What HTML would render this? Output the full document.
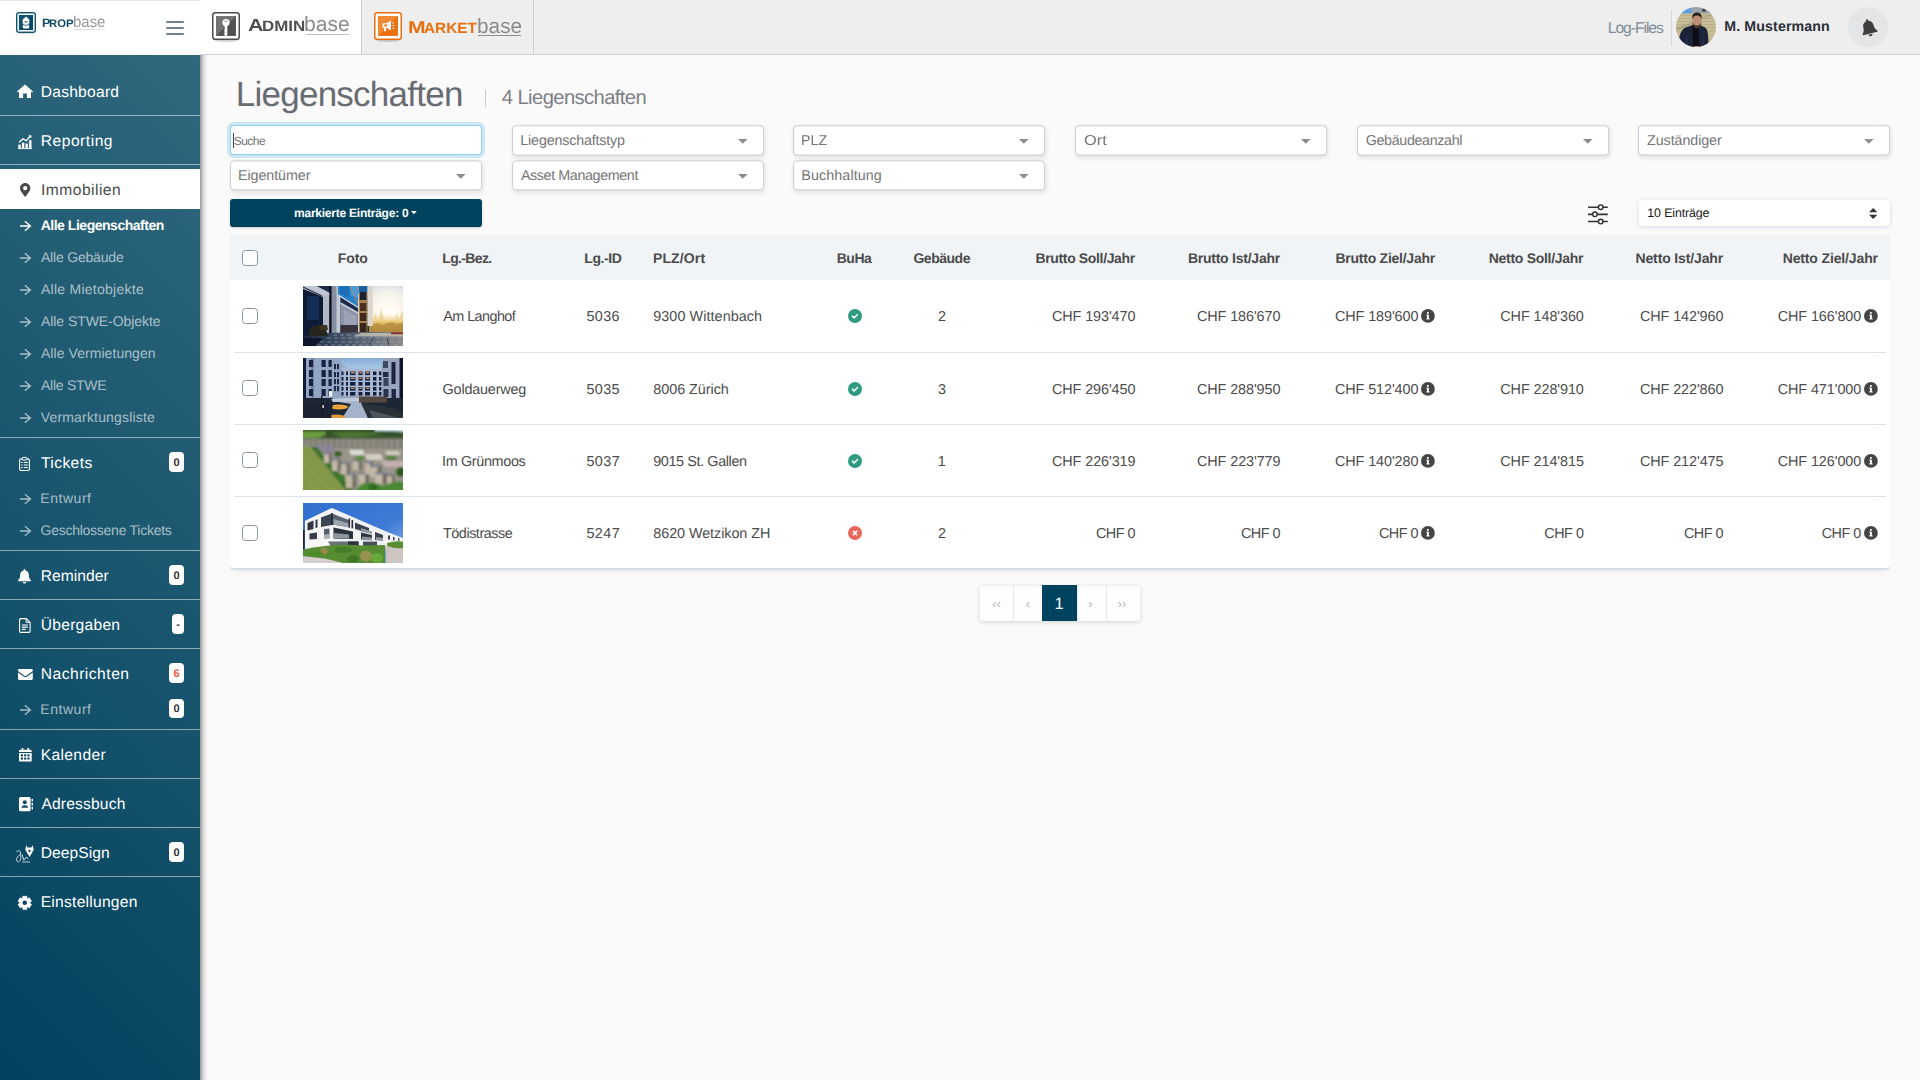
<!DOCTYPE html><html lang="de"><head><meta charset="utf-8"><title>Liegenschaften</title><style>
*{box-sizing:border-box;margin:0;padding:0}
html,body{width:1920px;height:1080px;overflow:hidden;background:#fafafa;font-family:"Liberation Sans",sans-serif;text-rendering:geometricPrecision;}
.t{position:absolute;white-space:nowrap;display:block}
.b{position:absolute;display:block}
svg{position:absolute;display:block;overflow:visible}
</style></head><body>
<div class="b" style="left:200px;top:0px;width:1720px;height:54px;background:#eee;"></div>
<div class="b" style="left:0px;top:0px;width:361px;height:54px;background:#fff;"></div>
<div class="b" style="left:200px;top:54px;width:1720px;height:1px;background:#ccd3d8;"></div>
<div class="b" style="left:361px;top:0px;width:1px;height:54px;background:#cfcfcf;"></div>
<div class="b" style="left:533px;top:0px;width:1px;height:54px;background:#cfcfcf;"></div>
<div class="b" style="left:0px;top:0px;width:200px;height:1px;background:#e4e4e4;"></div>
<aside style="position:absolute;left:0;top:0;width:0;height:0">
<div class="b" style="left:0px;top:55px;width:200px;height:1025px;background:linear-gradient(225deg,#30687d 0%,#19556e 50%,#02425e 100%);"></div>
<div class="b" style="left:200px;top:55px;width:8px;height:1025px;background:linear-gradient(90deg,rgba(0,0,0,.42) 0%,rgba(0,0,0,.22) 25%,rgba(0,0,0,.08) 60%,rgba(0,0,0,0) 100%);"></div>
<div class="b" style="left:0px;top:115px;width:200px;height:1px;background:rgba(255,255,255,.5);"></div>
<div class="b" style="left:0px;top:164px;width:200px;height:1px;background:rgba(255,255,255,.5);"></div>
<div class="b" style="left:0px;top:437px;width:200px;height:1px;background:rgba(255,255,255,.5);"></div>
<div class="b" style="left:0px;top:550px;width:200px;height:1px;background:rgba(255,255,255,.5);"></div>
<div class="b" style="left:0px;top:599px;width:200px;height:1px;background:rgba(255,255,255,.5);"></div>
<div class="b" style="left:0px;top:648px;width:200px;height:1px;background:rgba(255,255,255,.5);"></div>
<div class="b" style="left:0px;top:729px;width:200px;height:1px;background:rgba(255,255,255,.5);"></div>
<div class="b" style="left:0px;top:778px;width:200px;height:1px;background:rgba(255,255,255,.5);"></div>
<div class="b" style="left:0px;top:827px;width:200px;height:1px;background:rgba(255,255,255,.5);"></div>
<div class="b" style="left:0px;top:876px;width:200px;height:1px;background:rgba(255,255,255,.5);"></div>
<div class="b" style="left:0px;top:169px;width:200px;height:40px;background:#fff;"></div>
<span class="t" style="left:40.73px;top:81.00px;font-size:15.6px;line-height:24px;color:#fff;letter-spacing:0.248px;">Dashboard</span>
<span class="t" style="left:40.73px;top:130.00px;font-size:15.6px;line-height:24px;color:#fff;letter-spacing:0.520px;">Reporting</span>
<span class="t" style="left:41.06px;top:179.00px;font-size:15.6px;line-height:24px;color:#4a4a4a;letter-spacing:0.472px;">Immobilien</span>
<span class="t" style="left:40.96px;top:452.00px;font-size:15.6px;line-height:24px;color:#fff;letter-spacing:0.416px;">Tickets</span>
<span class="t" style="left:40.73px;top:565.00px;font-size:15.6px;line-height:24px;color:#fff;letter-spacing:0.060px;">Reminder</span>
<span class="t" style="left:40.80px;top:614.00px;font-size:15.6px;line-height:24px;color:#fff;letter-spacing:0.256px;">Übergaben</span>
<span class="t" style="left:40.73px;top:663.00px;font-size:15.6px;line-height:24px;color:#fff;letter-spacing:0.506px;">Nachrichten</span>
<span class="t" style="left:40.73px;top:744.00px;font-size:15.6px;line-height:24px;color:#fff;letter-spacing:0.356px;">Kalender</span>
<span class="t" style="left:41.47px;top:793.00px;font-size:15.6px;line-height:24px;color:#fff;letter-spacing:0.165px;">Adressbuch</span>
<span class="t" style="left:40.73px;top:842.00px;font-size:15.6px;line-height:24px;color:#fff;letter-spacing:0.054px;">DeepSign</span>
<span class="t" style="left:40.73px;top:891.00px;font-size:15.6px;line-height:24px;color:#fff;letter-spacing:0.253px;">Einstellungen</span>
<span class="t" style="left:40.66px;top:214.00px;font-size:14px;line-height:22px;color:#fff;font-weight:700;letter-spacing:-0.475px;">Alle Liegenschaften</span>
<svg style="left:20.3px;top:221px;" width="11" height="10" viewBox="0 0 11 10"><path d="M0 5 H10.2 M4.9 0.3 L10.4 5 L4.9 9.7" stroke="#fff" stroke-width="1.4" fill="none" stroke-linejoin="miter"/></svg>
<span class="t" style="left:40.98px;top:246.00px;font-size:14px;line-height:22px;color:rgba(255,255,255,.62);letter-spacing:-0.193px;">Alle Gebäude</span>
<svg style="left:20.3px;top:253px;" width="11" height="10" viewBox="0 0 11 10"><path d="M0 5 H10.2 M4.9 0.3 L10.4 5 L4.9 9.7" stroke="rgba(255,255,255,.62)" stroke-width="1.4" fill="none" stroke-linejoin="miter"/></svg>
<span class="t" style="left:40.98px;top:278.00px;font-size:14px;line-height:22px;color:rgba(255,255,255,.62);letter-spacing:0.260px;">Alle Mietobjekte</span>
<svg style="left:20.3px;top:285px;" width="11" height="10" viewBox="0 0 11 10"><path d="M0 5 H10.2 M4.9 0.3 L10.4 5 L4.9 9.7" stroke="rgba(255,255,255,.62)" stroke-width="1.4" fill="none" stroke-linejoin="miter"/></svg>
<span class="t" style="left:40.98px;top:310.00px;font-size:14px;line-height:22px;color:rgba(255,255,255,.62);letter-spacing:-0.060px;">Alle STWE-Objekte</span>
<svg style="left:20.3px;top:317px;" width="11" height="10" viewBox="0 0 11 10"><path d="M0 5 H10.2 M4.9 0.3 L10.4 5 L4.9 9.7" stroke="rgba(255,255,255,.62)" stroke-width="1.4" fill="none" stroke-linejoin="miter"/></svg>
<span class="t" style="left:40.98px;top:342.00px;font-size:14px;line-height:22px;color:rgba(255,255,255,.62);letter-spacing:0.061px;">Alle Vermietungen</span>
<svg style="left:20.3px;top:349px;" width="11" height="10" viewBox="0 0 11 10"><path d="M0 5 H10.2 M4.9 0.3 L10.4 5 L4.9 9.7" stroke="rgba(255,255,255,.62)" stroke-width="1.4" fill="none" stroke-linejoin="miter"/></svg>
<span class="t" style="left:40.98px;top:374.00px;font-size:14px;line-height:22px;color:rgba(255,255,255,.62);letter-spacing:-0.260px;">Alle STWE</span>
<svg style="left:20.3px;top:381px;" width="11" height="10" viewBox="0 0 11 10"><path d="M0 5 H10.2 M4.9 0.3 L10.4 5 L4.9 9.7" stroke="rgba(255,255,255,.62)" stroke-width="1.4" fill="none" stroke-linejoin="miter"/></svg>
<span class="t" style="left:40.75px;top:406.00px;font-size:14px;line-height:22px;color:rgba(255,255,255,.62);letter-spacing:0.174px;">Vermarktungsliste</span>
<svg style="left:20.3px;top:413px;" width="11" height="10" viewBox="0 0 11 10"><path d="M0 5 H10.2 M4.9 0.3 L10.4 5 L4.9 9.7" stroke="rgba(255,255,255,.62)" stroke-width="1.4" fill="none" stroke-linejoin="miter"/></svg>
<span class="t" style="left:40.36px;top:487.00px;font-size:14px;line-height:22px;color:rgba(255,255,255,.62);letter-spacing:0.523px;">Entwurf</span>
<svg style="left:20.3px;top:494px;" width="11" height="10" viewBox="0 0 11 10"><path d="M0 5 H10.2 M4.9 0.3 L10.4 5 L4.9 9.7" stroke="rgba(255,255,255,.62)" stroke-width="1.4" fill="none" stroke-linejoin="miter"/></svg>
<span class="t" style="left:40.60px;top:519.00px;font-size:14px;line-height:22px;color:rgba(255,255,255,.62);letter-spacing:-0.262px;">Geschlossene Tickets</span>
<svg style="left:20.3px;top:526px;" width="11" height="10" viewBox="0 0 11 10"><path d="M0 5 H10.2 M4.9 0.3 L10.4 5 L4.9 9.7" stroke="rgba(255,255,255,.62)" stroke-width="1.4" fill="none" stroke-linejoin="miter"/></svg>
<span class="t" style="left:40.36px;top:698.00px;font-size:14px;line-height:22px;color:rgba(255,255,255,.62);letter-spacing:0.523px;">Entwurf</span>
<svg style="left:20.3px;top:705.2px;" width="11" height="10" viewBox="0 0 11 10"><path d="M0 5 H10.2 M4.9 0.3 L10.4 5 L4.9 9.7" stroke="rgba(255,255,255,.62)" stroke-width="1.4" fill="none" stroke-linejoin="miter"/></svg>
<div class="b" style="left:169px;top:452.25px;width:15px;height:19.5px;background:#fff;border-radius:4px;"></div>
<span class="t" style="left:173.45px;top:455.00px;font-size:11px;line-height:16px;color:#333;font-weight:700;">0</span>
<div class="b" style="left:169px;top:565.25px;width:15px;height:19.5px;background:#fff;border-radius:4px;"></div>
<span class="t" style="left:173.45px;top:568.00px;font-size:11px;line-height:16px;color:#333;font-weight:700;">0</span>
<div class="b" style="left:172px;top:614.25px;width:12px;height:19.5px;background:#fff;border-radius:4px;"></div>
<span class="t" style="left:176.17px;top:617.00px;font-size:11px;line-height:16px;color:#333;font-weight:700;">-</span>
<div class="b" style="left:169px;top:663.25px;width:15px;height:19.5px;background:#fff;border-radius:4px;"></div>
<span class="t" style="left:173.44px;top:666.00px;font-size:11px;line-height:16px;color:#e8604c;font-weight:700;">6</span>
<div class="b" style="left:169px;top:698.75px;width:15px;height:19.5px;background:#fff;border-radius:4px;"></div>
<span class="t" style="left:173.45px;top:701.00px;font-size:11px;line-height:16px;color:#333;font-weight:700;">0</span>
<div class="b" style="left:169px;top:842.25px;width:15px;height:19.5px;background:#fff;border-radius:4px;"></div>
<span class="t" style="left:173.45px;top:845.00px;font-size:11px;line-height:16px;color:#333;font-weight:700;">0</span>
<svg style="left:16.7px;top:84.4px;" width="16" height="14" viewBox="0 0 16 14"><path d="M8 0.6 L16 7.4 L15.1 8.4 L14 7.5 V13.4 Q14 14 13.4 14 H9.9 V9.6 H6.1 V14 H2.6 Q2 14 2 13.4 V7.5 L0.9 8.4 L0 7.4 Z" fill="#fff"/></svg>
<svg style="left:17.7px;top:134.8px;" width="14" height="14.2" viewBox="0 0 14 14.2"><rect x="0.3" y="9.6" width="2.4" height="3.8" fill="#fff"/><rect x="3.9" y="7.6" width="2.4" height="5.8" fill="#fff"/><rect x="7.5" y="8.6" width="2.4" height="4.8" fill="#fff"/><rect x="11.1" y="5.2" width="2.4" height="8.2" fill="#fff"/><rect x="0" y="13.2" width="14" height="0.9" fill="#fff"/><path d="M1.2 7.2 L4.9 3.8 L8.3 5.6 L12.2 1.2" stroke="#fff" stroke-width="1.3" fill="none"/><path d="M10.4 0.3 H13.4 V3.3 Z" fill="#fff"/></svg>
<svg style="left:19.5px;top:183.1px;" width="10.4" height="13.8" viewBox="0 0 10.4 13.8"><path d="M5.2 0 C2.3 0 0 2.3 0 5.2 C0 7.3 0.7 7.9 4.65 13.4 Q5.2 14.1 5.75 13.4 C9.7 7.9 10.4 7.3 10.4 5.2 C10.4 2.3 8.1 0 5.2 0 Z M5.2 3.1 A2.1 2.1 0 1 1 5.2 7.3 A2.1 2.1 0 1 1 5.2 3.1 Z" fill="#4a4a4a" fill-rule="evenodd"/></svg>
<svg style="left:19px;top:457px;" width="11" height="14" viewBox="0 0 11 14"><rect x="0.6" y="1.9" width="9.8" height="11.6" rx="1.5" fill="none" stroke="#fff" stroke-width="1.1"/><rect x="3" y="0.4" width="5" height="2.6" rx="1" fill="#1c5871" stroke="#fff" stroke-width="1"/><path d="M4.8 5.4 H8.8 M4.8 8 H8.8 M4.8 10.6 H8.8" stroke="#fff" stroke-width="1"/><path d="M2.3 5.4 H3.6 M2.3 8 H3.6 M2.3 10.6 H3.6" stroke="#fff" stroke-width="1.1"/></svg>
<svg style="left:18.4px;top:568.9px;" width="13.0" height="14.6" viewBox="0 0 13 14.6"><path d="M6.5 0 Q7.4 0 7.4 0.9 V1.4 C9.6 1.9 10.9 3.7 10.9 6 C10.9 9 11.7 10 12.7 11 Q13.3 11.7 12.6 12.2 H0.4 Q-0.3 11.7 0.3 11 C1.3 10 2.1 9 2.1 6 C2.1 3.7 3.4 1.9 5.6 1.4 V0.9 Q5.6 0 6.5 0 Z M4.8 12.9 H8.2 A1.7 1.7 0 0 1 4.8 12.9 Z" fill="#fff"/></svg>
<svg style="left:19px;top:617.5px;" width="11.7" height="15" viewBox="0 0 11.7 15"><path d="M1.6 0.6 H7.2 L11.1 4.5 V13.3 Q11.1 14.4 10 14.4 H1.6 Q0.6 14.4 0.6 13.3 V1.6 Q0.6 0.6 1.6 0.6 Z" fill="none" stroke="#fff" stroke-width="1.1"/><path d="M7.2 0.6 V4.5 H11.1" fill="none" stroke="#fff" stroke-width="1"/><path d="M2.9 7 H8.8 M2.9 9.2 H8.8 M2.9 11.4 H6.6" stroke="#fff" stroke-width="1.2"/></svg>
<svg style="left:17.5px;top:668.8px;" width="14.8" height="11" viewBox="0 0 14.8 11"><path d="M1.3 0 H13.5 Q14.8 0 14.8 1.3 V1.9 L8.3 6.7 Q7.4 7.3 6.5 6.7 L0 1.9 V1.3 Q0 0 1.3 0 Z" fill="#fff"/><path d="M0 3.4 L6 7.8 Q7.4 8.7 8.8 7.8 L14.8 3.4 V9.7 Q14.8 11 13.5 11 H1.3 Q0 11 0 9.7 Z" fill="#fff"/></svg>
<svg style="left:18.5px;top:748.2px;" width="12.7" height="13.6" viewBox="0 0 12.7 13.6"><path d="M0 4.9 H12.7 V12.4 Q12.7 13.6 11.5 13.6 H1.2 Q0 13.6 0 12.4 Z M1.2 1.7 H11.5 Q12.7 1.7 12.7 2.9 V4 H0 V2.9 Q0 1.7 1.2 1.7 Z" fill="#fff"/><rect x="2.6" y="0" width="1.7" height="3" rx="0.4" fill="#fff"/><rect x="8.4" y="0" width="1.7" height="3" rx="0.4" fill="#fff"/><rect x="1.8" y="6.3" width="2.2" height="2.1" fill="#0d4a66"/><rect x="1.8" y="9.5" width="2.2" height="2.1" fill="#0d4a66"/><rect x="5.1" y="6.3" width="2.2" height="2.1" fill="#0d4a66"/><rect x="5.1" y="9.5" width="2.2" height="2.1" fill="#0d4a66"/><rect x="8.4" y="6.3" width="2.2" height="2.1" fill="#0d4a66"/><rect x="8.4" y="9.5" width="2.2" height="2.1" fill="#0d4a66"/></svg>
<svg style="left:18.5px;top:796.7px;" width="14" height="14.3" viewBox="0 0 14 14.3"><rect x="0" y="0" width="11.6" height="14.3" rx="1.6" fill="#fff"/><circle cx="5.8" cy="5.3" r="2" fill="#0c4965"/><path d="M2.5 10.8 Q2.5 8.2 5.8 8.2 Q9.1 8.2 9.1 10.8 Z" fill="#0c4965"/><rect x="12.6" y="1.7" width="1.4" height="2.8" rx="0.5" fill="#fff"/><rect x="12.6" y="5.7" width="1.4" height="2.8" rx="0.5" fill="#fff"/><rect x="12.6" y="9.7" width="1.4" height="2.8" rx="0.5" fill="#fff"/></svg>
<svg style="left:15.8px;top:845.1px;" width="18" height="17.8" viewBox="0 0 18 17.8"><path d="M10.2 0.3 L11.5 2.5 H15.5 L16.8 0.3 L17.7 4.7 L13.6 11.9 L9.3 4.7 Z" fill="#fff"/><circle cx="13.5" cy="6" r="1.15" fill="#0a4763"/><path d="M0.4 7.3 C1.2 5.4 3.6 5.2 4.2 6.4 C5 8 4.9 12.4 4.6 14.4 C4 17.2 1.4 17.6 0.6 15.4 C0 13 2.6 10.4 4.4 9.4" stroke="#fff" stroke-width="0.85" fill="none" opacity=".9"/><path d="M6.2 9.6 L7.8 15.2 L10.6 12 L12.2 14" stroke="#fff" stroke-width="0.9" fill="none" opacity=".9"/><path d="M6.2 17 H14" stroke="#fff" stroke-width="0.9" opacity=".8"/></svg>
<svg style="left:17.9px;top:895.6px;" width="13.6" height="13.6" viewBox="0 0 13.6 13.6"><path d="M4.76 2.23 L4.79 0.30 L8.81 0.30 L8.84 2.23 L9.73 2.75 L11.42 1.81 L13.43 5.29 L11.77 6.28 L11.77 7.32 L13.43 8.31 L11.42 11.79 L9.73 10.85 L8.84 11.37 L8.81 13.30 L4.79 13.30 L4.76 11.37 L3.87 10.85 L2.18 11.79 L0.17 8.31 L1.83 7.32 L1.83 6.28 L0.17 5.29 L2.18 1.81 L3.87 2.75 Z" fill="#fff" stroke="#fff" stroke-width="0.8" stroke-linejoin="round"/><circle cx="6.8" cy="6.8" r="2.3" fill="#0a4763"/></svg>
</aside>
<header style="position:absolute;left:0;top:0;width:0;height:0">
<svg style="left:16px;top:12px;" width="20" height="21" viewBox="0 0 20 21"><ellipse cx="10" cy="21.2" rx="8" ry="1" fill="rgba(0,0,0,.12)"/><rect x="0.6" y="0.6" width="18.8" height="19.8" rx="2.4" fill="#c9d6dd" stroke="#13536f" stroke-width="1.2"/><rect x="2.1" y="2.1" width="15.8" height="16.8" rx="1" fill="#fff" opacity=".75"/><rect x="3" y="3" width="14" height="15" fill="#04466a"/><path d="M3 3 H17 L3 18 Z" fill="#1a5877" opacity=".6"/><path d="M10 4.6 L14.2 8.4 H12.9 L13.6 11.4 H12.6 L12.2 13 H13.2 V15.6 Q13.2 16.4 12.4 16.4 H7.6 Q6.8 16.4 6.8 15.6 V13 H7.8 L7.4 11.4 H6.4 L7.1 8.4 H5.8 Z" fill="#fff"/><rect x="8.3" y="9.4" width="3.4" height="0.9" fill="#0b4a68"/><rect x="7.6" y="12.7" width="4.8" height="0.8" fill="#0b4a68"/></svg>
<span class="t" style="left:41.68px;top:14px;font-size:12.1px;line-height:18px;color:#0e4966;transform:scaleX(1.0351);transform-origin:0 0;font-weight:700;">P</span>
<span class="t" style="left:49.44px;top:16px;font-size:11px;line-height:16px;color:#0e4966;transform:scaleX(1.0293);transform-origin:0 0;font-weight:700;">ROP</span>
<span class="t" style="left:73.24px;top:11px;font-size:15.6px;line-height:24px;color:#9a9a9a;transform:scaleX(0.9588);transform-origin:0 0;">base</span>
<div class="b" style="left:74px;top:29px;width:31px;height:1px;background:#dcdcdc;"></div>
<div class="b" style="left:166px;top:20.5px;width:18px;height:2px;background:#6f8195;border-radius:1px;"></div>
<div class="b" style="left:166px;top:26.5px;width:18px;height:2px;background:#6f8195;border-radius:1px;"></div>
<div class="b" style="left:166px;top:32.5px;width:18px;height:2px;background:#6f8195;border-radius:1px;"></div>
<svg style="left:212px;top:12px;" width="28" height="28" viewBox="0 0 28 28"><ellipse cx="14.0" cy="28.6" rx="11.76" ry="1.4" fill="rgba(0,0,0,.18)"/><rect x="0.75" y="0.75" width="26.5" height="26.5" rx="2.6" fill="#fff" stroke="#4c4c4c" stroke-width="1.5"/><rect x="4.06" y="4.06" width="19.880000000000003" height="19.880000000000003" fill="#515151"/><path d="M4.06 4.06 H23.94 L4.06 23.94 Z" fill="#747474"/><circle cx="14" cy="10.6" r="3.6" fill="#fff"/><path d="M12.7 13 H15.3 V23 L14.2 24 H12.7 V22.4 L11.6 21.6 L12.7 20.8 V19.6 L11.6 18.8 L12.7 18 Z" fill="#fff"/><path d="M11.9 9.6 Q14 7.6 16.1 9.6 Z" fill="#6a6a6a"/></svg>
<span class="t" style="left:247.68px;top:12px;font-size:17.5px;line-height:26px;color:#505050;transform:scaleX(1.2239);transform-origin:0 0;font-weight:700;">A</span>
<span class="t" style="left:262.37px;top:16px;font-size:15px;line-height:22px;color:#505050;transform:scaleX(1.1286);transform-origin:0 0;font-weight:700;">DMIN</span>
<span class="t" style="left:304.26px;top:9px;font-size:20.8px;line-height:32px;color:#8c8c8c;transform:scaleX(1.0126);transform-origin:0 0;">base</span>
<div class="b" style="left:305.5px;top:34px;width:43.5px;height:1px;background:#c2c2c2;"></div>
<svg style="left:374px;top:12px;" width="28" height="28" viewBox="0 0 28 28"><ellipse cx="14.0" cy="28.6" rx="11.76" ry="1.4" fill="rgba(0,0,0,.18)"/><rect x="0.75" y="0.75" width="26.5" height="26.5" rx="2.6" fill="#fff" stroke="#ea700d" stroke-width="1.5"/><rect x="4.06" y="4.06" width="19.880000000000003" height="19.880000000000003" fill="#ea700d"/><path d="M4.06 4.06 H23.94 L4.06 23.94 Z" fill="#f08a33"/><path d="M9.4 11.2 H12.6 L17 8.4 V18.6 L12.6 15.8 H9.4 Q8.6 15.8 8.6 15 V12 Q8.6 11.2 9.4 11.2 Z" fill="#fff"/><rect x="10" y="15.6" width="2.2" height="3.6" fill="#fff"/><rect x="10.2" y="12.4" width="3" height="2" fill="#ea7a1c"/><path d="M18.3 11.3 L20.2 10.4 M18.5 13.5 H20.6 M18.3 15.7 L20.2 16.6" stroke="#fff" stroke-width="0.9"/></svg>
<span class="t" style="left:408.40px;top:15px;font-size:17px;line-height:26px;color:#ea700d;transform:scaleX(1.2430);transform-origin:0 0;font-weight:700;">M</span>
<span class="t" style="left:423.63px;top:18px;font-size:14.8px;line-height:22px;color:#ea700d;transform:scaleX(1.0366);transform-origin:0 0;font-weight:700;">ARKET</span>
<span class="t" style="left:476.67px;top:11px;font-size:20.8px;line-height:32px;color:#8c8c8c;transform:scaleX(1.0009);transform-origin:0 0;">base</span>
<div class="b" style="left:477.5px;top:35px;width:43.5px;height:1px;background:#8e8e8e;"></div>
<span class="t" style="left:1607.73px;top:17.00px;font-size:15.6px;line-height:24px;color:#7f8b99;letter-spacing:-1.002px;">Log-Files</span>
<div class="b" style="left:1671px;top:9.5px;width:1px;height:36px;background:#d6d6d6;"></div>
<svg style="left:1676px;top:7px;" width="40" height="40" viewBox="0 0 40 40"><defs><clipPath id="avc"><circle cx="20" cy="20" r="20"/></clipPath><filter id="avb" x="-5%" y="-5%" width="110%" height="110%"><feGaussianBlur stdDeviation="0.55"/></filter></defs><g clip-path="url(#avc)"><g filter="url(#avb)"><rect x="-2" y="-2" width="44" height="44" fill="#c8be97"/><rect x="-2" y="-2" width="44" height="8.4" fill="#9aa2a6"/><rect x="-2" y="-2" width="17.3" height="8.2" fill="#5c9fe0"/><ellipse cx="28" cy="3.2" rx="2" ry="1.6" fill="#3f4448"/><path d="M-2 8.5 H42 M-2 11.5 H42 M-2 14.5 H42 M-2 17.5 H42 M-2 20.5 H42 M-2 24 H42 M-2 28 H42 M-2 33 H42" stroke="#b3a982" stroke-width="0.7"/><path d="M-2 22 L16 15 L16 17.5 L-2 25 Z" fill="#a39b7c" opacity=".7"/><path d="M24 10 L40 6 V8 L24 13 Z" fill="#aaa283" opacity=".6"/><path d="M1 42 L3.4 30 Q5 21.5 11 20 L17 18 L25 18.4 L29 20.4 Q31.6 22 32 28 L33 42 Z" fill="#1c2238"/><path d="M9 42 L11 26 L13 42 Z M26 42 L27 27 L29 42 Z" fill="#2a3150" opacity=".7"/><path d="M16.2 18.5 L17.6 42 H23.2 L22.6 18.5 Z" fill="#0b0c12"/><ellipse cx="20.9" cy="13.6" rx="4.6" ry="6.4" fill="#bb8f73"/><path d="M16.2 12.5 Q15.4 5.4 21 5.4 Q26.6 5.4 25.7 12.5 Q24.6 8.4 21 8.5 Q17.4 8.4 16.2 12.5 Z" fill="#2b211b"/><path d="M16.4 15.5 Q17 21.6 20.9 21.6 Q24.8 21.6 25.3 15.5 Q23.8 18.6 20.9 18.4 Q18 18.6 16.4 15.5 Z" fill="#4a3528"/><ellipse cx="20.5" cy="40" rx="2.6" ry="0.9" fill="#c79a86"/></g></g></svg>
<span class="t" style="left:1724.26px;top:16.00px;font-size:14.2px;line-height:22px;color:#2c3038;font-weight:700;letter-spacing:0.121px;">M. Mustermann</span>
<div class="b" style="left:1847.8px;top:6.8px;width:40.2px;height:40.2px;background:#e4e5e7;border-radius:50%;"></div>
<svg style="left:1860.6000000000001px;top:18.88px;transform:rotate(-14deg);transform-origin:50% 50%;" width="15.6" height="17.52" viewBox="0 0 13 14.6"><path d="M6.5 0 Q7.4 0 7.4 0.9 V1.4 C9.6 1.9 10.9 3.7 10.9 6 C10.9 9 11.7 10 12.7 11 Q13.3 11.7 12.6 12.2 H0.4 Q-0.3 11.7 0.3 11 C1.3 10 2.1 9 2.1 6 C2.1 3.7 3.4 1.9 5.6 1.4 V0.9 Q5.6 0 6.5 0 Z M4.8 12.9 H8.2 A1.7 1.7 0 0 1 4.8 12.9 Z" fill="#3f3f3f"/></svg>
</header>
<main style="position:absolute;left:0;top:0;width:0;height:0">
<span class="t" style="left:235.74px;top:73.00px;font-size:35px;line-height:44px;color:#686b72;letter-spacing:-0.746px;">Liegenschaften</span>
<div class="b" style="left:485px;top:90px;width:1px;height:16.8px;background:#c3ccd3;"></div>
<span class="t" style="left:501.85px;top:85.00px;font-size:20.2px;line-height:26px;color:#7c8086;letter-spacing:-0.596px;">4 Liegenschaften</span>
<div class="b" style="left:230px;top:125px;width:252px;height:30px;background:#fff;border:1px solid #8fd0ea;border-radius:4px;box-shadow:0 0 0 3px rgba(130,200,232,.38);"></div>
<div class="b" style="left:233px;top:133px;width:1px;height:15px;background:#45454c;"></div>
<span class="t" style="left:233.67px;top:132.00px;font-size:12px;line-height:18px;color:#74747c;letter-spacing:-0.492px;">Suche</span>
<div class="b" style="left:230px;top:160px;width:251.6px;height:30px;background:#fff;border:1px solid #c9cfd6;border-radius:4px;box-shadow:1px 2px 5px rgba(0,0,0,.10);transform-origin:0 0;transform:translateY(0.45px) scaleY(0.996);"></div>
<span class="t" style="left:238.03px;top:165.00px;font-size:14.3px;line-height:22px;color:#757575;letter-spacing:-0.078px;">Eigentümer</span>
<svg style="left:455.8px;top:173.9px;" width="9.6" height="4.8" viewBox="0 0 9.6 4.8"><path d="M0 0 H9.6 L4.8 4.8 Z" fill="#8c8c8c"/></svg>
<div class="b" style="left:512px;top:125px;width:251.6px;height:30px;background:#fff;border:1px solid #c9cfd6;border-radius:4px;box-shadow:1px 2px 5px rgba(0,0,0,.10);transform-origin:0 0;transform:translateY(0.3px) scaleY(1.008);"></div>
<span class="t" style="left:520.33px;top:130.00px;font-size:14.3px;line-height:22px;color:#757575;letter-spacing:-0.175px;">Liegenschaftstyp</span>
<svg style="left:737.8px;top:138.9px;" width="9.6" height="4.8" viewBox="0 0 9.6 4.8"><path d="M0 0 H9.6 L4.8 4.8 Z" fill="#8c8c8c"/></svg>
<div class="b" style="left:512px;top:160px;width:251.6px;height:30px;background:#fff;border:1px solid #c9cfd6;border-radius:4px;box-shadow:1px 2px 5px rgba(0,0,0,.10);transform-origin:0 0;transform:translateY(0.45px) scaleY(0.996);"></div>
<span class="t" style="left:520.88px;top:165.00px;font-size:14.3px;line-height:22px;color:#757575;letter-spacing:-0.377px;">Asset Management</span>
<svg style="left:737.8px;top:173.9px;" width="9.6" height="4.8" viewBox="0 0 9.6 4.8"><path d="M0 0 H9.6 L4.8 4.8 Z" fill="#8c8c8c"/></svg>
<div class="b" style="left:793px;top:125px;width:251.6px;height:30px;background:#fff;border:1px solid #c9cfd6;border-radius:4px;box-shadow:1px 2px 5px rgba(0,0,0,.10);transform-origin:0 0;transform:translateY(0.3px) scaleY(1.008);"></div>
<span class="t" style="left:801.33px;top:130px;font-size:14.3px;line-height:22px;color:#757575;transform:scaleX(0.9996);transform-origin:0 0;">PLZ</span>
<svg style="left:1018.8px;top:138.9px;" width="9.6" height="4.8" viewBox="0 0 9.6 4.8"><path d="M0 0 H9.6 L4.8 4.8 Z" fill="#8c8c8c"/></svg>
<div class="b" style="left:793px;top:160px;width:251.6px;height:30px;background:#fff;border:1px solid #c9cfd6;border-radius:4px;box-shadow:1px 2px 5px rgba(0,0,0,.10);transform-origin:0 0;transform:translateY(0.45px) scaleY(0.996);"></div>
<span class="t" style="left:801.33px;top:165.00px;font-size:14.3px;line-height:22px;color:#757575;letter-spacing:0.099px;">Buchhaltung</span>
<svg style="left:1018.8px;top:173.9px;" width="9.6" height="4.8" viewBox="0 0 9.6 4.8"><path d="M0 0 H9.6 L4.8 4.8 Z" fill="#8c8c8c"/></svg>
<div class="b" style="left:1075px;top:125px;width:251.6px;height:30px;background:#fff;border:1px solid #c9cfd6;border-radius:4px;box-shadow:1px 2px 5px rgba(0,0,0,.10);transform-origin:0 0;transform:translateY(0.3px) scaleY(1.008);"></div>
<span class="t" style="left:1083.73px;top:130px;font-size:14.3px;line-height:22px;color:#757575;transform:scaleX(1.1427);transform-origin:0 0;">Ort</span>
<svg style="left:1300.8px;top:138.9px;" width="9.6" height="4.8" viewBox="0 0 9.6 4.8"><path d="M0 0 H9.6 L4.8 4.8 Z" fill="#8c8c8c"/></svg>
<div class="b" style="left:1357px;top:125px;width:251.6px;height:30px;background:#fff;border:1px solid #c9cfd6;border-radius:4px;box-shadow:1px 2px 5px rgba(0,0,0,.10);transform-origin:0 0;transform:translateY(0.3px) scaleY(1.008);"></div>
<span class="t" style="left:1365.78px;top:130.00px;font-size:14.3px;line-height:22px;color:#757575;letter-spacing:-0.358px;">Gebäudeanzahl</span>
<svg style="left:1582.8px;top:138.9px;" width="9.6" height="4.8" viewBox="0 0 9.6 4.8"><path d="M0 0 H9.6 L4.8 4.8 Z" fill="#8c8c8c"/></svg>
<div class="b" style="left:1638px;top:125px;width:251.6px;height:30px;background:#fff;border:1px solid #c9cfd6;border-radius:4px;box-shadow:1px 2px 5px rgba(0,0,0,.10);transform-origin:0 0;transform:translateY(0.3px) scaleY(1.008);"></div>
<span class="t" style="left:1647.05px;top:130.00px;font-size:14.3px;line-height:22px;color:#757575;letter-spacing:-0.081px;">Zuständiger</span>
<svg style="left:1863.8px;top:138.9px;" width="9.6" height="4.8" viewBox="0 0 9.6 4.8"><path d="M0 0 H9.6 L4.8 4.8 Z" fill="#8c8c8c"/></svg>
<div class="b" style="left:230px;top:199px;width:252px;height:28px;background:#00435f;border-radius:3px;box-shadow:0 1px 2px rgba(0,0,0,.2);"></div>
<span class="t" style="left:294.02px;top:204.00px;font-size:12px;line-height:18px;color:#fff;font-weight:700;letter-spacing:-0.236px;">markierte Einträge: 0</span>
<svg style="left:411.2px;top:211.2px;" width="5.8" height="3.2" viewBox="0 0 5.8 3.2"><path d="M0 0 H5.8 L2.9 3.2 Z" fill="#fff"/></svg>
<div class="b" style="left:1639px;top:199.7px;width:250.6px;height:26.4px;background:#fff;border-radius:4px;box-shadow:0 1px 5px rgba(60,80,110,.18);"></div>
<span class="t" style="left:1647.36px;top:204.00px;font-size:12.4px;line-height:18px;color:#1a1a1a;letter-spacing:-0.137px;">10 Einträge</span>
<svg style="left:1868.6px;top:207.6px;" width="8.4" height="11" viewBox="0 0 8.4 11"><path d="M0 4.3 L4.2 0 L8.4 4.3 Z M0 6.7 H8.4 L4.2 11 Z" fill="#333"/></svg>
<svg style="left:1588.1px;top:203.55px;" width="19.8" height="20.8" viewBox="0 0 19.8 20.8"><path d="M0 3.2 H19.8 M0 10.35 H19.8 M0 17.55 H19.8" stroke="#333" stroke-width="1.6"/><circle cx="12.7" cy="3.2" r="2.3" fill="#fafafa" stroke="#2d2d2d" stroke-width="1.4"/><circle cx="6.9" cy="10.35" r="2.3" fill="#fafafa" stroke="#2d2d2d" stroke-width="1.4"/><circle cx="12.7" cy="17.55" r="2.3" fill="#fafafa" stroke="#2d2d2d" stroke-width="1.4"/></svg>
<div class="b" style="left:230px;top:234.6px;width:1660px;height:333.4px;background:#fff;border-radius:3px;box-shadow:0 1px 0 0 #d0dce3,0 2px 1px 0 rgba(200,212,220,.45),0 7px 6px -4px rgba(0,0,0,.09);"></div>
<div class="b" style="left:230px;top:234.6px;width:1660px;height:45px;background:#f0f4f7;border-radius:3px 3px 0 0;"></div>
<div class="b" style="left:234px;top:351.5px;width:1652px;height:1px;background:#dbe4e9;"></div>
<div class="b" style="left:234px;top:424.0px;width:1652px;height:1px;background:#dbe4e9;"></div>
<div class="b" style="left:234px;top:496.1px;width:1652px;height:1px;background:#dbe4e9;"></div>
<span class="t" style="left:337.78px;top:247.00px;font-size:14px;line-height:22px;color:#4b4b4b;font-weight:700;letter-spacing:-0.086px;">Foto</span>
<span class="t" style="left:442.28px;top:247.00px;font-size:14px;line-height:22px;color:#4b4b4b;font-weight:700;letter-spacing:-0.652px;">Lg.-Bez.</span>
<span class="t" style="left:584.28px;top:247.00px;font-size:14px;line-height:22px;color:#4b4b4b;font-weight:700;letter-spacing:-0.391px;">Lg.-ID</span>
<span class="t" style="left:652.98px;top:247.00px;font-size:14px;line-height:22px;color:#4b4b4b;font-weight:700;letter-spacing:0.125px;">PLZ/Ort</span>
<span class="t" style="left:836.68px;top:247.00px;font-size:14px;line-height:22px;color:#4b4b4b;font-weight:700;letter-spacing:-0.440px;">BuHa</span>
<span class="t" style="left:913.44px;top:247.00px;font-size:14px;line-height:22px;color:#4b4b4b;font-weight:700;letter-spacing:-0.479px;">Gebäude</span>
<span class="t" style="left:1035.48px;top:247.00px;font-size:14px;line-height:22px;color:#4b4b4b;font-weight:700;letter-spacing:-0.353px;">Brutto Soll/Jahr</span>
<span class="t" style="left:1187.88px;top:247.00px;font-size:14px;line-height:22px;color:#4b4b4b;font-weight:700;letter-spacing:-0.240px;">Brutto Ist/Jahr</span>
<span class="t" style="left:1335.48px;top:247.00px;font-size:14px;line-height:22px;color:#4b4b4b;font-weight:700;letter-spacing:-0.249px;">Brutto Ziel/Jahr</span>
<span class="t" style="left:1488.78px;top:247.00px;font-size:14px;line-height:22px;color:#4b4b4b;font-weight:700;letter-spacing:-0.291px;">Netto Soll/Jahr</span>
<span class="t" style="left:1635.48px;top:247.00px;font-size:14px;line-height:22px;color:#4b4b4b;font-weight:700;letter-spacing:-0.134px;">Netto Ist/Jahr</span>
<span class="t" style="left:1782.68px;top:247.00px;font-size:14px;line-height:22px;color:#4b4b4b;font-weight:700;letter-spacing:-0.137px;">Netto Ziel/Jahr</span>
<div class="b" style="left:242px;top:250px;width:16px;height:16px;background:#fff;border:1px solid #8796a6;border-radius:3.5px;"></div>
<div class="b" style="left:242px;top:308px;width:16px;height:16px;background:#fff;border:1px solid #8796a6;border-radius:3.5px;"></div>
<svg style="left:303px;top:286px;" width="100" height="60" viewBox="0 0 100 60"><defs><filter id="pb0" x="-3%" y="-3%" width="106%" height="106%"><feGaussianBlur stdDeviation="0.7"/></filter><clipPath id="pc0"><rect width="100" height="60"/></clipPath></defs><g clip-path="url(#pc0)"><g filter="url(#pb0)"><rect x="-2" y="-2" width="104" height="64" fill="#1a2b48"/><defs><radialGradient id="sun" gradientUnits="userSpaceOnUse" cx="85" cy="28" r="34"><stop offset="0" stop-color="#ffffff"/><stop offset="0.3" stop-color="#fffaf0"/><stop offset="0.7" stop-color="#f1efe9"/><stop offset="1" stop-color="#cbd8ea"/></radialGradient><linearGradient id="gold" x1="0" y1="0" x2="0" y2="1"><stop offset="0" stop-color="#fff6dc" stop-opacity="0"/><stop offset="0.45" stop-color="#ecc56e"/><stop offset="1" stop-color="#8f7a4a"/></linearGradient><linearGradient id="grd" x1="0" y1="0" x2="1" y2="0"><stop offset="0" stop-color="#13233a"/><stop offset="0.35" stop-color="#3c4c61"/><stop offset="0.75" stop-color="#6d7683"/><stop offset="1" stop-color="#8d8a84"/></linearGradient></defs><rect x="66" y="-2" width="36" height="52" fill="url(#sun)"/><rect x="66" y="26" width="36" height="22" fill="url(#gold)"/><path d="M70 36 L72 27 L75 36 Z M76 34 L78 22 L81 34 Z M92 36 L94 27 L96 36 Z M96 34 L99 24 L102 34 Z" fill="#e9cf93" opacity=".75"/><path d="M66 40 Q74 35 80 39 Q88 34 94 38 L102 36 V47 H66 Z" fill="#b48a3a" opacity=".75"/><rect x="-2" y="2" width="22" height="50" fill="#0d1b36"/><rect x="4" y="10" width="12" height="24" fill="#16335a" opacity=".85"/><path d="M-2 -2 H10 L27 7 V11 L20 11 L-2 2 Z" fill="#bfc5d2"/><path d="M0 1 L19 10" stroke="#2a2f3c" stroke-width="1.2"/><rect x="20" y="9" width="6.4" height="40" fill="#b4b9c7"/><rect x="26.4" y="-2" width="2.2" height="51" fill="#080d19"/><rect x="28.6" y="-2" width="4.6" height="50" fill="#878ea1"/><rect x="33.2" y="-2" width="4.2" height="50" fill="#c3c8d5"/><path d="M35 -2 H66 V8 L56 22 L35 9 Z" fill="#2a7fc9"/><path d="M37 -2 H46 L46 12 L37 7 Z" fill="#1f6db8"/><path d="M48 -2 L56 -2 L56 12 L48 9 Z" fill="#4a9adb"/><path d="M46 -2 L56 20 M52 -2 L60 12" stroke="#b98e68" stroke-width="0.9"/><path d="M35 9 L56 22" stroke="#d7dbe4" stroke-width="1.4"/><path d="M56 -2 H64 V7 H56 Z" fill="#1e5f9e"/><path d="M37.4 17 L55 27 V47 H37.4 Z" fill="#8d94a7"/><path d="M41 24 L53 30 V40 H41 Z" fill="#a4aabb" opacity=".7"/><path d="M37.4 17 L55 27" stroke="#c9cdd8" stroke-width="1.6"/><rect x="37.4" y="39" width="18" height="8" fill="#37333c"/><path d="M55 8 L56 8 V47 H55 Z" fill="#c9cdd8"/><rect x="56" y="6" width="8.4" height="41" fill="#a8824f"/><rect x="56.8" y="6" width="6.6" height="8" fill="#1c2230"/><rect x="57" y="17" width="6.4" height="8" fill="#4a3220"/><rect x="57" y="27" width="6.4" height="8" fill="#3e2a1c"/><rect x="57" y="37" width="6.4" height="9" fill="#35251b"/><rect x="64.4" y="0" width="5.4" height="40" fill="#dcd7cc"/><path d="M-2 50 L26 47 L60 46 H102 V62 H-2 Z" fill="url(#grd)"/><path d="M30 49 H100 M24 52 H100 M10 56 H100 M0 59 H100" stroke="#aab4c2" stroke-width="0.9" stroke-dasharray="4 3" opacity=".6"/><path d="M58 47 H102 V50.5 H50 Z" fill="#c3bcad" opacity=".85"/><path d="M70 52 L66 60 M84 52 L86 60" stroke="#2a3443" stroke-width="0.8"/><rect x="88" y="46.4" width="14" height="1.8" fill="#8c2b2b"/><path d="M8 40 H22 L25 50 H6 Z" fill="#26261f"/><path d="M16 39 L24 39 L25 44 L17 44 Z" fill="#3a3424"/><path d="M-2 52 L20 52 L10 62 H-2 Z" fill="#0c192b"/></g></g></svg>
<span class="t" style="left:443.28px;top:306.00px;font-size:14.4px;line-height:22px;color:#4c4c4c;letter-spacing:-0.567px;">Am Langhof</span>
<span class="t" style="left:586.44px;top:306.00px;font-size:14.4px;line-height:22px;color:#4c4c4c;letter-spacing:0.380px;">5036</span>
<span class="t" style="left:653.23px;top:306.00px;font-size:14.4px;line-height:22px;color:#4c4c4c;letter-spacing:0.063px;">9300 Wittenbach</span>
<svg style="left:848px;top:309.2px;" width="14" height="14" viewBox="0 0 14 14"><circle cx="7" cy="7" r="7" fill="#2e9b80"/><path d="M3.9 6.8 L6.1 8.9 L9.8 5.2" stroke="#fff" stroke-width="1.5" fill="none"/></svg>
<span class="t" style="left:937.99px;top:306.00px;font-size:14.4px;line-height:22px;color:#4c4c4c;">2</span>
<span class="t" style="left:1051.88px;top:306.00px;font-size:14.4px;line-height:22px;color:#4c4c4c;letter-spacing:-0.076px;">CHF 193&#x27;470</span>
<span class="t" style="left:1196.88px;top:306.00px;font-size:14.4px;line-height:22px;color:#4c4c4c;letter-spacing:-0.076px;">CHF 186&#x27;670</span>
<svg style="left:1421.1999999999998px;top:309.3px;" width="13.8" height="13.8" viewBox="0 0 14 14"><circle cx="7" cy="7" r="7" fill="#454545"/><rect x="6.1" y="5.9" width="1.9" height="4.3" fill="#fff"/><rect x="5.4" y="5.9" width="2" height="1" fill="#fff"/><rect x="5.3" y="9.6" width="3.5" height="1" fill="#fff"/><circle cx="7" cy="4" r="1.05" fill="#fff"/></svg>
<span class="t" style="left:1334.88px;top:306.00px;font-size:14.4px;line-height:22px;color:#4c4c4c;letter-spacing:-0.076px;">CHF 189&#x27;600</span>
<span class="t" style="left:1500.28px;top:306.00px;font-size:14.4px;line-height:22px;color:#4c4c4c;letter-spacing:-0.076px;">CHF 148&#x27;360</span>
<span class="t" style="left:1639.88px;top:306.00px;font-size:14.4px;line-height:22px;color:#4c4c4c;letter-spacing:-0.076px;">CHF 142&#x27;960</span>
<svg style="left:1863.9999999999998px;top:309.3px;" width="13.8" height="13.8" viewBox="0 0 14 14"><circle cx="7" cy="7" r="7" fill="#454545"/><rect x="6.1" y="5.9" width="1.9" height="4.3" fill="#fff"/><rect x="5.4" y="5.9" width="2" height="1" fill="#fff"/><rect x="5.3" y="9.6" width="3.5" height="1" fill="#fff"/><circle cx="7" cy="4" r="1.05" fill="#fff"/></svg>
<span class="t" style="left:1777.68px;top:306.00px;font-size:14.4px;line-height:22px;color:#4c4c4c;letter-spacing:-0.076px;">CHF 166&#x27;800</span>
<div class="b" style="left:242px;top:380px;width:16px;height:16px;background:#fff;border:1px solid #8796a6;border-radius:3.5px;"></div>
<svg style="left:303px;top:358px;" width="100" height="60" viewBox="0 0 100 60"><defs><filter id="pb1" x="-3%" y="-3%" width="106%" height="106%"><feGaussianBlur stdDeviation="0.7"/></filter><clipPath id="pc1"><rect width="100" height="60"/></clipPath></defs><g clip-path="url(#pc1)"><g filter="url(#pb1)"><rect x="-2" y="-2" width="104" height="64" fill="#95a6c3"/><defs><linearGradient id="sk2" x1="0" y1="0" x2="0" y2="1"><stop offset="0" stop-color="#7fa9d3"/><stop offset="1" stop-color="#a9c8e4"/></linearGradient></defs><path d="M36 -2 H82 L78 11 H46 L38 6 Z" fill="url(#sk2)"/><path d="M-2 -2 H37 L39 8 V40 H-2 Z" fill="#93a5c4"/><rect x="-2" y="-2" width="5" height="64" fill="#111e39"/><rect x="8" y="-2" width="3" height="44" fill="#5a6c8e" opacity=".6"/><rect x="6" y="2" width="4" height="7" fill="#16223d"/><rect x="6" y="12" width="4" height="7" fill="#16223d"/><rect x="6" y="21" width="4" height="7" fill="#16223d"/><rect x="6" y="31" width="4" height="7" fill="#16223d"/><rect x="18.5" y="2" width="4.2" height="7" fill="#16223d"/><rect x="18.5" y="12" width="4.2" height="7" fill="#16223d"/><rect x="18.5" y="21" width="4.2" height="7" fill="#16223d"/><rect x="18.5" y="31" width="4.2" height="7" fill="#16223d"/><rect x="25.5" y="2" width="3.2" height="7" fill="#16223d"/><rect x="25.5" y="12" width="3.2" height="7" fill="#16223d"/><rect x="25.5" y="21" width="3.2" height="7" fill="#16223d"/><rect x="25.5" y="31" width="3.2" height="7" fill="#16223d"/><rect x="31" y="6" width="2" height="5.2" fill="#1d2a47"/><rect x="31" y="14" width="2" height="5.2" fill="#1d2a47"/><rect x="31" y="21" width="2" height="5.2" fill="#1d2a47"/><rect x="31" y="28" width="2" height="5.2" fill="#1d2a47"/><rect x="34" y="6" width="2" height="5.2" fill="#1d2a47"/><rect x="34" y="14" width="2" height="5.2" fill="#1d2a47"/><rect x="34" y="21" width="2" height="5.2" fill="#1d2a47"/><rect x="34" y="28" width="2" height="5.2" fill="#1d2a47"/><path d="M39 9 L46 10.5 H79 V38 H39 Z" fill="#a9b8d2"/><rect x="38.5" y="13.5" width="2" height="3.6" fill="#17223c"/><rect x="38.5" y="19" width="2" height="3.6" fill="#17223c"/><rect x="38.5" y="24" width="2" height="3.6" fill="#17223c"/><rect x="38.5" y="29" width="2" height="3.6" fill="#17223c"/><rect x="38.5" y="34" width="2" height="3.6" fill="#17223c"/><rect x="43" y="13.5" width="2" height="3.6" fill="#17223c"/><rect x="43" y="19" width="2" height="3.6" fill="#17223c"/><rect x="43" y="24" width="2" height="3.6" fill="#17223c"/><rect x="43" y="29" width="2" height="3.6" fill="#17223c"/><rect x="43" y="34" width="2" height="3.6" fill="#17223c"/><rect x="47" y="13.5" width="5.4" height="3.6" fill="#17223c"/><rect x="47.8" y="13.9" width="3.8000000000000003" height="1.6" fill="#c08a66"/><rect x="47" y="19" width="5.4" height="3.6" fill="#17223c"/><rect x="47.8" y="19.4" width="3.8000000000000003" height="1.6" fill="#c08a66"/><rect x="47" y="24" width="5.4" height="3.6" fill="#17223c"/><rect x="47" y="29" width="5.4" height="3.6" fill="#17223c"/><rect x="47.8" y="29.4" width="3.8000000000000003" height="1.6" fill="#c08a66"/><rect x="47" y="34" width="5.4" height="3.6" fill="#17223c"/><rect x="55.5" y="13.5" width="4" height="3.6" fill="#17223c"/><rect x="56.3" y="13.9" width="2.4" height="1.6" fill="#c08a66"/><rect x="55.5" y="19" width="4" height="3.6" fill="#17223c"/><rect x="56.3" y="19.4" width="2.4" height="1.6" fill="#c08a66"/><rect x="55.5" y="24" width="4" height="3.6" fill="#17223c"/><rect x="55.5" y="29" width="4" height="3.6" fill="#17223c"/><rect x="56.3" y="29.4" width="2.4" height="1.6" fill="#c08a66"/><rect x="55.5" y="34" width="4" height="3.6" fill="#17223c"/><rect x="62" y="13.5" width="5" height="3.6" fill="#17223c"/><rect x="62.8" y="13.9" width="3.4" height="1.6" fill="#c08a66"/><rect x="62" y="19" width="5" height="3.6" fill="#17223c"/><rect x="62.8" y="19.4" width="3.4" height="1.6" fill="#c08a66"/><rect x="62" y="24" width="5" height="3.6" fill="#17223c"/><rect x="62" y="29" width="5" height="3.6" fill="#17223c"/><rect x="62.8" y="29.4" width="3.4" height="1.6" fill="#c08a66"/><rect x="62" y="34" width="5" height="3.6" fill="#17223c"/><rect x="70" y="13.5" width="3.4" height="3.6" fill="#17223c"/><rect x="70" y="19" width="3.4" height="3.6" fill="#17223c"/><rect x="70" y="24" width="3.4" height="3.6" fill="#17223c"/><rect x="70" y="29" width="3.4" height="3.6" fill="#17223c"/><rect x="70" y="34" width="3.4" height="3.6" fill="#17223c"/><rect x="76" y="13.5" width="2.4" height="3.6" fill="#17223c"/><rect x="76" y="19" width="2.4" height="3.6" fill="#17223c"/><rect x="76" y="24" width="2.4" height="3.6" fill="#17223c"/><rect x="76" y="29" width="2.4" height="3.6" fill="#17223c"/><rect x="76" y="34" width="2.4" height="3.6" fill="#17223c"/><path d="M80 -2 H102 V55 L79 40 V11 Z" fill="#98a4bc"/><rect x="80" y="3" width="5" height="7" fill="#3a4a68"/><rect x="80" y="14" width="5.4" height="5" fill="#1c2947"/><rect x="80.5" y="20" width="5" height="8" fill="#33425f"/><rect x="80.5" y="31" width="5" height="8" fill="#27334f"/><rect x="88.5" y="4" width="4" height="22" fill="#1a2541"/><rect x="88.5" y="31" width="4.4" height="18" fill="#1c2743"/><rect x="96.5" y="-2" width="6" height="64" fill="#0b1429"/><path d="M-2 40 H102 V62 H-2 Z" fill="#1e2836"/><path d="M30 40 H56 L58 44 L66 62 H38 L48 46 L30 43 Z" fill="#a4b2ca"/><path d="M28 41 L56 40 L56 43 L30 44 Z" fill="#c3cbdb"/><rect x="56" y="38.5" width="28" height="6" fill="#514840"/><path d="M58 45 L90 50 L102 58 V62 H66 Z" fill="#2a3338"/><path d="M66 52 L96 60 H70 Z" fill="#5b6673" opacity=".7"/><ellipse cx="36" cy="49" rx="9" ry="2.6" fill="#e9a53a"/><ellipse cx="33" cy="59" rx="9" ry="2.4" fill="#e39a3a"/><path d="M4 46 L30 44 L28 62 H-2 Z" fill="#1a2330"/><rect x="26" y="33" width="3.2" height="5.4" fill="#f4f5f2"/><rect x="19" y="47" width="1.8" height="3" fill="#f0eee6"/><rect x="18" y="38" width="1.4" height="22" fill="#121a28"/></g></g></svg>
<span class="t" style="left:442.58px;top:379.00px;font-size:14.4px;line-height:22px;color:#4c4c4c;letter-spacing:-0.185px;">Goldauerweg</span>
<span class="t" style="left:586.44px;top:379.00px;font-size:14.4px;line-height:22px;color:#4c4c4c;letter-spacing:0.370px;">5035</span>
<span class="t" style="left:653.27px;top:379.00px;font-size:14.4px;line-height:22px;color:#4c4c4c;letter-spacing:-0.042px;">8006 Zürich</span>
<svg style="left:848px;top:382px;" width="14" height="14" viewBox="0 0 14 14"><circle cx="7" cy="7" r="7" fill="#2e9b80"/><path d="M3.9 6.8 L6.1 8.9 L9.8 5.2" stroke="#fff" stroke-width="1.5" fill="none"/></svg>
<span class="t" style="left:938.03px;top:379.00px;font-size:14.4px;line-height:22px;color:#4c4c4c;">3</span>
<span class="t" style="left:1051.88px;top:379.00px;font-size:14.4px;line-height:22px;color:#4c4c4c;letter-spacing:-0.076px;">CHF 296&#x27;450</span>
<span class="t" style="left:1196.88px;top:379.00px;font-size:14.4px;line-height:22px;color:#4c4c4c;letter-spacing:-0.076px;">CHF 288&#x27;950</span>
<svg style="left:1421.1999999999998px;top:382.1px;" width="13.8" height="13.8" viewBox="0 0 14 14"><circle cx="7" cy="7" r="7" fill="#454545"/><rect x="6.1" y="5.9" width="1.9" height="4.3" fill="#fff"/><rect x="5.4" y="5.9" width="2" height="1" fill="#fff"/><rect x="5.3" y="9.6" width="3.5" height="1" fill="#fff"/><circle cx="7" cy="4" r="1.05" fill="#fff"/></svg>
<span class="t" style="left:1334.88px;top:379.00px;font-size:14.4px;line-height:22px;color:#4c4c4c;letter-spacing:-0.076px;">CHF 512&#x27;400</span>
<span class="t" style="left:1500.28px;top:379.00px;font-size:14.4px;line-height:22px;color:#4c4c4c;letter-spacing:-0.076px;">CHF 228&#x27;910</span>
<span class="t" style="left:1639.88px;top:379.00px;font-size:14.4px;line-height:22px;color:#4c4c4c;letter-spacing:-0.076px;">CHF 222&#x27;860</span>
<svg style="left:1863.9999999999998px;top:382.1px;" width="13.8" height="13.8" viewBox="0 0 14 14"><circle cx="7" cy="7" r="7" fill="#454545"/><rect x="6.1" y="5.9" width="1.9" height="4.3" fill="#fff"/><rect x="5.4" y="5.9" width="2" height="1" fill="#fff"/><rect x="5.3" y="9.6" width="3.5" height="1" fill="#fff"/><circle cx="7" cy="4" r="1.05" fill="#fff"/></svg>
<span class="t" style="left:1777.68px;top:379.00px;font-size:14.4px;line-height:22px;color:#4c4c4c;letter-spacing:-0.076px;">CHF 471&#x27;000</span>
<div class="b" style="left:242px;top:452px;width:16px;height:16px;background:#fff;border:1px solid #8796a6;border-radius:3.5px;"></div>
<svg style="left:303px;top:430px;" width="100" height="60" viewBox="0 0 100 60"><defs><filter id="pb2" x="-3%" y="-3%" width="106%" height="106%"><feGaussianBlur stdDeviation="0.9"/></filter><clipPath id="pc2"><rect width="100" height="60"/></clipPath></defs><g clip-path="url(#pc2)"><g filter="url(#pb2)"><rect x="-2" y="-2" width="104" height="64" fill="#8c8a7e"/><rect x="-2" y="-2" width="104" height="11" fill="#35522a"/><path d="M72 -2 H102 V2 Q88 0.5 72 1 Z" fill="#cfe3ee"/><path d="M-2 1.5 H22 Q26 5 14 8 H-2 Z" fill="#6c9c3c"/><path d="M28 3 Q50 0 80 4 Q60 7 40 8 Z" fill="#4b7430"/><rect x="-2" y="8.5" width="104" height="10" fill="#8b8780"/><path d="M0 12 H100 M0 15 H100" stroke="#b5a9a6" stroke-width="1.2" stroke-dasharray="3 2.5" opacity=".55"/><path d="M0 10 H100 M0 13.5 H100 M0 17 H100" stroke="#4b6a3a" stroke-width="1.3" stroke-dasharray="2.6 3.4" opacity=".65"/><rect x="-2" y="18" width="104" height="44" fill="#9a9588"/><path d="M10 15 H30 L32 22 H14 Z" fill="#8d8494"/><path d="M-2 16 L8 17 L44 62 H-2 Z" fill="#83994a"/><path d="M-2 30 L30 62 M-2 42 L18 62" stroke="#8ea653" stroke-width="2" opacity=".6"/><path d="M8 17 L14 17 L52 62 H44 Z" fill="#3c7229"/><rect x="21" y="24" width="8" height="9" fill="#c3b8a6"/><rect x="25.96" y="24" width="3.04" height="9" fill="#5a554f" opacity=".75"/><rect x="21" y="22" width="8" height="2.4" fill="#7c7f8c"/><rect x="29" y="30" width="9" height="11" fill="#c3b8a6"/><rect x="34.58" y="30" width="3.42" height="11" fill="#5a554f" opacity=".75"/><rect x="29" y="28" width="9" height="2.4" fill="#7c7f8c"/><rect x="38" y="34" width="9" height="12" fill="#c3b8a6"/><rect x="43.58" y="34" width="3.42" height="12" fill="#5a554f" opacity=".75"/><rect x="38" y="32" width="9" height="2.4" fill="#7c7f8c"/><rect x="43" y="45" width="10" height="13" fill="#c3b8a6"/><rect x="49.2" y="45" width="3.8" height="13" fill="#5a554f" opacity=".75"/><rect x="43" y="43" width="10" height="2.4" fill="#7c7f8c"/><rect x="56" y="44" width="10" height="13" fill="#c3b8a6"/><rect x="62.2" y="44" width="3.8" height="13" fill="#5a554f" opacity=".75"/><rect x="56" y="42" width="10" height="2.4" fill="#7c7f8c"/><rect x="50" y="31" width="9" height="9" fill="#c3b8a6"/><rect x="55.58" y="31" width="3.42" height="9" fill="#5a554f" opacity=".75"/><rect x="50" y="29" width="9" height="2.4" fill="#7c7f8c"/><rect x="62" y="33" width="8" height="11" fill="#c3b8a6"/><rect x="66.96" y="33" width="3.04" height="11" fill="#5a554f" opacity=".75"/><rect x="62" y="31" width="8" height="2.4" fill="#7c7f8c"/><rect x="67" y="37" width="12" height="10" fill="#c3b8a6"/><rect x="74.44" y="37" width="4.5600000000000005" height="10" fill="#5a554f" opacity=".75"/><rect x="67" y="35" width="12" height="2.4" fill="#7c7f8c"/><rect x="72" y="44" width="12" height="10" fill="#c3b8a6"/><rect x="79.44" y="44" width="4.5600000000000005" height="10" fill="#5a554f" opacity=".75"/><rect x="72" y="42" width="12" height="2.4" fill="#7c7f8c"/><rect x="84" y="46" width="8" height="9" fill="#c3b8a6"/><rect x="88.96" y="46" width="3.04" height="9" fill="#5a554f" opacity=".75"/><rect x="84" y="44" width="8" height="2.4" fill="#7c7f8c"/><path d="M46 20 H60 L62 25 H48 Z" fill="#dcdad6"/><path d="M62 24 H78 L80 30 H64 Z" fill="#d3cec4"/><path d="M82 21 H96 L97 25 H84 Z" fill="#cfcabd"/><path d="M78 31 H102 V37 H82 Z" fill="#c4b0b0"/><ellipse cx="57" cy="28" rx="5" ry="2.6" fill="#5d8a3c"/><ellipse cx="35" cy="24" rx="4" ry="3" fill="#3d5f2c"/><ellipse cx="88" cy="28" rx="6" ry="2.5" fill="#55803a"/><ellipse cx="98" cy="42" rx="5" ry="5" fill="#2f5a24"/><path d="M52 62 L58 54 Q70 50 80 56 Q92 50 102 52 V62 Z" fill="#4b8a32"/><ellipse cx="38" cy="47" rx="4" ry="3" fill="#3f7a2b"/><ellipse cx="70" cy="57" rx="5" ry="3.6" fill="#2f6a24"/></g></g></svg>
<span class="t" style="left:441.97px;top:451.00px;font-size:14.4px;line-height:22px;color:#4c4c4c;letter-spacing:-0.332px;">Im Grünmoos</span>
<span class="t" style="left:586.44px;top:451.00px;font-size:14.4px;line-height:22px;color:#4c4c4c;letter-spacing:0.411px;">5037</span>
<span class="t" style="left:653.23px;top:451.00px;font-size:14.4px;line-height:22px;color:#4c4c4c;letter-spacing:-0.386px;">9015 St. Gallen</span>
<svg style="left:848px;top:454.1px;" width="14" height="14" viewBox="0 0 14 14"><circle cx="7" cy="7" r="7" fill="#2e9b80"/><path d="M3.9 6.8 L6.1 8.9 L9.8 5.2" stroke="#fff" stroke-width="1.5" fill="none"/></svg>
<span class="t" style="left:937.80px;top:451.00px;font-size:14.4px;line-height:22px;color:#4c4c4c;">1</span>
<span class="t" style="left:1051.88px;top:451.00px;font-size:14.4px;line-height:22px;color:#4c4c4c;letter-spacing:-0.065px;">CHF 226&#x27;319</span>
<span class="t" style="left:1196.88px;top:451.00px;font-size:14.4px;line-height:22px;color:#4c4c4c;letter-spacing:-0.065px;">CHF 223&#x27;779</span>
<svg style="left:1421.1999999999998px;top:454.20000000000005px;" width="13.8" height="13.8" viewBox="0 0 14 14"><circle cx="7" cy="7" r="7" fill="#454545"/><rect x="6.1" y="5.9" width="1.9" height="4.3" fill="#fff"/><rect x="5.4" y="5.9" width="2" height="1" fill="#fff"/><rect x="5.3" y="9.6" width="3.5" height="1" fill="#fff"/><circle cx="7" cy="4" r="1.05" fill="#fff"/></svg>
<span class="t" style="left:1334.88px;top:451.00px;font-size:14.4px;line-height:22px;color:#4c4c4c;letter-spacing:-0.076px;">CHF 140&#x27;280</span>
<span class="t" style="left:1500.28px;top:451.00px;font-size:14.4px;line-height:22px;color:#4c4c4c;letter-spacing:-0.072px;">CHF 214&#x27;815</span>
<span class="t" style="left:1639.88px;top:451.00px;font-size:14.4px;line-height:22px;color:#4c4c4c;letter-spacing:-0.072px;">CHF 212&#x27;475</span>
<svg style="left:1863.9999999999998px;top:454.20000000000005px;" width="13.8" height="13.8" viewBox="0 0 14 14"><circle cx="7" cy="7" r="7" fill="#454545"/><rect x="6.1" y="5.9" width="1.9" height="4.3" fill="#fff"/><rect x="5.4" y="5.9" width="2" height="1" fill="#fff"/><rect x="5.3" y="9.6" width="3.5" height="1" fill="#fff"/><circle cx="7" cy="4" r="1.05" fill="#fff"/></svg>
<span class="t" style="left:1777.68px;top:451.00px;font-size:14.4px;line-height:22px;color:#4c4c4c;letter-spacing:-0.076px;">CHF 126&#x27;000</span>
<div class="b" style="left:242px;top:525px;width:16px;height:16px;background:#fff;border:1px solid #8796a6;border-radius:3.5px;"></div>
<svg style="left:303px;top:503px;" width="100" height="60" viewBox="0 0 100 60"><defs><filter id="pb3" x="-3%" y="-3%" width="106%" height="106%"><feGaussianBlur stdDeviation="0.7"/></filter><clipPath id="pc3"><rect width="100" height="60"/></clipPath></defs><g clip-path="url(#pc3)"><g filter="url(#pb3)"><defs><linearGradient id="sk4" x1="0" y1="0" x2="1" y2="1"><stop offset="0" stop-color="#2f6fcf"/><stop offset="0.6" stop-color="#3e7ad6"/><stop offset="1" stop-color="#9fbfe8"/></linearGradient></defs><rect x="-2" y="-2" width="104" height="64" fill="url(#sk4)"/><path d="M2 18 L29 5 L82 28 L102 36 V44 H2 Z" fill="#f1f2f4"/><path d="M2 18 L29 5 L29 47 L2 47 Z" fill="#f6f6f7"/><rect x="-2" y="27" width="3.6" height="19" fill="#1d2030"/><path d="M4.5 20 L10.5 17.5 V26 L4.5 27.5 Z" fill="#2f3644"/><path d="M12.5 17 L14.5 16.2 V24.5 L12.5 25 Z" fill="#2f3644"/><path d="M6.5 30.5 L14 29.5 V36 L6.5 36.5 Z" fill="#343b49"/><path d="M18 14.5 L29 10.5 V22 L18 24 Z" fill="#3c4452"/><path d="M29 10.5 L47 17.5 V24.5 L29 21.5 Z" fill="#5a6270"/><path d="M30.5 16 L46 20.5 V24.5 L30.5 21.5 Z" fill="#9ba3ad"/><rect x="28.2" y="10" width="1.8" height="12" fill="#2a2f3a"/><path d="M52 19.5 L66 25 V30 L52 26 Z" fill="#3a4050"/><path d="M58 25 L69 28.6 V31 L58 28.4 Z" fill="#8f97a2"/><rect x="45.5" y="15.5" width="1.6" height="9" fill="#2a2f3a"/><rect x="48.5" y="17" width="1.6" height="8.4" fill="#2a2f3a"/><path d="M30.5 24.5 L50 28.5 V36 L30.5 35.5 Z" fill="#2c3240"/><path d="M31 30 L46 31.6 V35.4 L31 35 Z" fill="#8e969f"/><path d="M21 26 L26.5 25.4 V34.5 L21 35 Z" fill="#59606e"/><path d="M21 31.5 L27 31 V35.5 L21 36 Z" fill="#aab0b8"/><path d="M58 29.5 L69 32 V37 L58 36.5 Z" fill="#30363f"/><path d="M59 33.4 L69 34.6 V37.4 L59 37 Z" fill="#8d949c"/><path d="M72 29 L80 32 V37.5 L72 37 Z" fill="#3a3f4c"/><path d="M73 34 L80 35 V37.6 L73 37.2 Z" fill="#9097a0"/><rect x="85" y="32.5" width="2" height="4" fill="#3f4552"/><rect x="90" y="34" width="1.6" height="3.4" fill="#4a505c"/><rect x="95" y="35" width="1.4" height="3" fill="#565c68"/><path d="M25 38.4 H56 V43.5 H28 Z" fill="#6a6f7a"/><rect x="45" y="38.4" width="10" height="5" fill="#2d323c"/><rect x="60" y="38.6" width="14" height="4.4" fill="#4a4f5a"/><path d="M-2 47 Q10 44 22 43 Q40 41 60 42.5 L82 42 V62 H-2 Z" fill="#578d33"/><ellipse cx="21" cy="48" rx="3.4" ry="3.6" fill="#a98555" opacity=".85"/><ellipse cx="63" cy="53" rx="6" ry="5.5" fill="#a89258" opacity=".8"/><ellipse cx="40" cy="47" rx="9" ry="3" fill="#447b26"/><ellipse cx="50" cy="56" rx="6" ry="3.4" fill="#3f7424"/><ellipse cx="12" cy="51" rx="8" ry="2.6" fill="#4d8a2c"/><ellipse cx="74" cy="55" rx="6" ry="5" fill="#66a83a"/><path d="M-2 53 L22 55.5 L48 62 H-2 Z" fill="#d5cfd0"/><path d="M82 43 L102 44.5 V62 H83 Q84 52 82 43 Z" fill="#cdc5c1"/><path d="M84 40 Q94 37 102 39 V45 Q92 46 84 43 Z" fill="#5a9030"/></g></g></svg>
<span class="t" style="left:442.99px;top:523.00px;font-size:14.4px;line-height:22px;color:#4c4c4c;letter-spacing:-0.462px;">Tödistrasse</span>
<span class="t" style="left:586.44px;top:523.00px;font-size:14.4px;line-height:22px;color:#4c4c4c;letter-spacing:0.411px;">5247</span>
<span class="t" style="left:653.27px;top:523.00px;font-size:14.4px;line-height:22px;color:#4c4c4c;letter-spacing:-0.069px;">8620 Wetzikon ZH</span>
<svg style="left:848px;top:526.1px;" width="14" height="14" viewBox="0 0 14 14"><circle cx="7" cy="7" r="7" fill="#e9675a"/><path d="M4.9 4.9 L9.1 9.1 M9.1 4.9 L4.9 9.1" stroke="#fff" stroke-width="1.5" fill="none"/></svg>
<span class="t" style="left:937.99px;top:523.00px;font-size:14.4px;line-height:22px;color:#4c4c4c;">2</span>
<span class="t" style="left:1095.88px;top:523.00px;font-size:14.4px;line-height:22px;color:#4c4c4c;letter-spacing:-0.486px;">CHF 0</span>
<span class="t" style="left:1240.88px;top:523.00px;font-size:14.4px;line-height:22px;color:#4c4c4c;letter-spacing:-0.486px;">CHF 0</span>
<svg style="left:1421.1999999999998px;top:526.2px;" width="13.8" height="13.8" viewBox="0 0 14 14"><circle cx="7" cy="7" r="7" fill="#454545"/><rect x="6.1" y="5.9" width="1.9" height="4.3" fill="#fff"/><rect x="5.4" y="5.9" width="2" height="1" fill="#fff"/><rect x="5.3" y="9.6" width="3.5" height="1" fill="#fff"/><circle cx="7" cy="4" r="1.05" fill="#fff"/></svg>
<span class="t" style="left:1378.88px;top:523.00px;font-size:14.4px;line-height:22px;color:#4c4c4c;letter-spacing:-0.486px;">CHF 0</span>
<span class="t" style="left:1544.28px;top:523.00px;font-size:14.4px;line-height:22px;color:#4c4c4c;letter-spacing:-0.486px;">CHF 0</span>
<span class="t" style="left:1683.88px;top:523.00px;font-size:14.4px;line-height:22px;color:#4c4c4c;letter-spacing:-0.486px;">CHF 0</span>
<svg style="left:1863.9999999999998px;top:526.2px;" width="13.8" height="13.8" viewBox="0 0 14 14"><circle cx="7" cy="7" r="7" fill="#454545"/><rect x="6.1" y="5.9" width="1.9" height="4.3" fill="#fff"/><rect x="5.4" y="5.9" width="2" height="1" fill="#fff"/><rect x="5.3" y="9.6" width="3.5" height="1" fill="#fff"/><circle cx="7" cy="4" r="1.05" fill="#fff"/></svg>
<span class="t" style="left:1821.68px;top:523.00px;font-size:14.4px;line-height:22px;color:#4c4c4c;letter-spacing:-0.486px;">CHF 0</span>
<div class="b" style="left:979.5px;top:585.5px;width:160.5px;height:35.5px;background:#fdfdfd;box-shadow:0 1px 5px rgba(0,0,0,.16);border-radius:2px;"></div>
<div class="b" style="left:1013px;top:586px;width:1px;height:35px;background:#e6e8ea;"></div>
<div class="b" style="left:1041.5px;top:586px;width:1px;height:35px;background:#e6e8ea;"></div>
<div class="b" style="left:1076.5px;top:586px;width:1px;height:35px;background:#e6e8ea;"></div>
<div class="b" style="left:1105.5px;top:586px;width:1px;height:35px;background:#e6e8ea;"></div>
<div class="b" style="left:1042px;top:585px;width:34.5px;height:36px;background:#00435f;"></div>
<span class="t" style="left:1054.49px;top:592.00px;font-size:16.5px;line-height:24px;color:#fff;">1</span>
<span class="t" style="left:992.18px;top:594.00px;font-size:13px;line-height:20px;color:#b4b4b4;">‹‹</span>
<span class="t" style="left:1025.84px;top:594.00px;font-size:13px;line-height:20px;color:#b4b4b4;">‹</span>
<span class="t" style="left:1088.33px;top:594.00px;font-size:13px;line-height:20px;color:#b4b4b4;">›</span>
<span class="t" style="left:1117.66px;top:594.00px;font-size:13px;line-height:20px;color:#b4b4b4;">››</span>
</main>
</body></html>
